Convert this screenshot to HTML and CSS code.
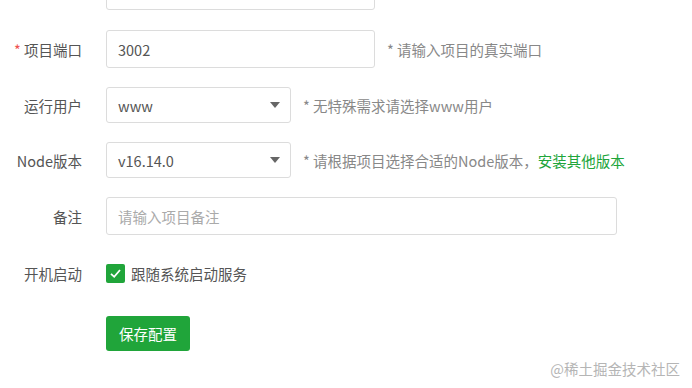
FILE: index.html
```html
<!DOCTYPE html>
<html lang="zh-CN">

<head>
    <meta charset="UTF-8">
    <meta name="viewport" content="width=device-width, initial-scale=1.0">
    <title>项目设置</title>
    <link rel="stylesheet" href="styles.css">
</head>

<body>
    <form class="form">
        <div class="row row-first">
            <label class="label">项目名称</label>
            <input class="input" type="text" value="">
            <span class="hint">* 项目名称，如：my-app，jq-py</span>
        </div>

        <div class="row">
            <label class="label"><span class="required">*</span> 项目端口</label>
            <input class="input" type="text" value="3002">
            <span class="hint">* 请输入项目的真实端口</span>
        </div>

        <div class="row row-select">
            <label class="label">运行用户</label>
            <div class="select">
                <span>www</span>
                <i class="arrow"></i>
            </div>
            <span class="hint">* 无特殊需求请选择www用户</span>
        </div>

        <div class="row row-select">
            <label class="label">Node版本</label>
            <div class="select">
                <span>v16.14.0</span>
                <i class="arrow"></i>
            </div>
            <span class="hint">* 请根据项目选择合适的Node版本，<a class="link" href="#">安装其他版本</a></span>
        </div>

        <div class="row">
            <label class="label">备注</label>
            <input class="input input-wide" type="text" placeholder="请输入项目备注">
        </div>

        <div class="row">
            <label class="label">开机启动</label>
            <span class="checkbox">
                <svg width="13" height="13" viewBox="0 0 13 13">
                    <path d="M2 6.8 L5.2 9.8 L11 3" fill="none" stroke="#fff" stroke-width="1.8" />
                </svg>
            </span>
            <span class="check-text">跟随系统启动服务</span>
        </div>

        <div class="row row-button">
            <span class="label"></span>
            <button type="button" class="btn">保存配置</button>
        </div>
    </form>

    <div class="watermark">@稀土掘金技术社区</div>
</body>

</html>
```

FILE: styles.css
```css
body {
    margin: 0;
    font-family: "Noto Sans CJK SC", "Noto Sans", sans-serif;
    font-size: 14.5px;
    color: #555;
    background: #fff;
    overflow: hidden;
}

.form {
    margin-top: -28px;
    display: flex;
    flex-direction: column;
}

.row {
    display: flex;
    align-items: center;
    height: 38px;
    margin-bottom: 19px;
}

.row-first {
    margin-bottom: 20px;
}

.row-first .hint {
    margin-bottom: 4px;
}

.row-select {
    height: 36px;
}

.row-button {
    height: 35px;
    margin-top: 5px;
}

.label {
    width: 82px;
    flex-shrink: 0;
    margin-right: 24px;
    text-align: right;
    color: #555;
}

.required {
    color: #ef5350;
}

.input {
    box-sizing: border-box;
    width: 269px;
    height: 38px;
    padding: 0 11px;
    border: 1px solid #dcdcdc;
    border-radius: 3px;
    font-family: inherit;
    font-size: 14.5px;
    color: #555;
    outline: none;
}

.input::placeholder {
    color: #aaa;
}

.input-wide {
    width: 511px;
}

.select {
    box-sizing: border-box;
    width: 185px;
    height: 36px;
    padding: 0 10px 0 11px;
    border: 1px solid #dcdcdc;
    border-radius: 3px;
    display: flex;
    align-items: center;
    justify-content: space-between;
    color: #555;
}

.arrow {
    width: 0;
    height: 0;
    border-left: 5.5px solid transparent;
    border-right: 5.5px solid transparent;
    border-top: 6px solid #666;
}

.hint {
    margin-left: 12px;
    color: #888;
    white-space: nowrap;
}

.link {
    color: #20a53a;
    text-decoration: none;
}

.checkbox {
    width: 19px;
    height: 19px;
    border-radius: 2px;
    background: #20a53a;
    display: flex;
    align-items: center;
    justify-content: center;
}

.check-text {
    margin-left: 6px;
    color: #555;
}

.btn {
    width: 84px;
    height: 35px;
    border: none;
    border-radius: 3px;
    background: #20a53a;
    color: #fff;
    font-family: inherit;
    font-size: 14.5px;
    cursor: pointer;
}

.watermark {
    position: absolute;
    right: 12px;
    top: 358px;
    font-size: 14.5px;
    color: #b5b5b5;
}
```
